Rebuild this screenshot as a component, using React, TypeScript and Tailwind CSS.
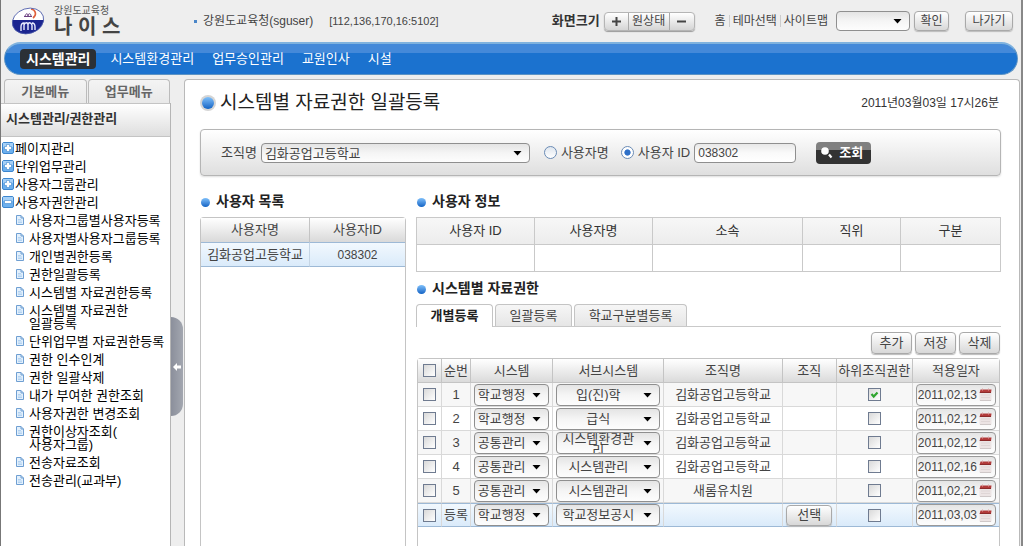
import { useState } from 'react'
import type { ReactNode } from 'react'

const topMenus = ['시스템환경관리', '업무승인관리', '교원인사', '시설']

const folders = ['페이지관리', '단위업무관리', '사용자그룹관리']

const pages = [
  ['사용자그룹별사용자등록'],
  ['사용자별사용자그룹등록'],
  ['개인별권한등록'],
  ['권한일괄등록'],
  ['시스템별 자료권한등록'],
  ['시스템별 자료권한', '일괄등록'],
  ['단위업무별 자료권한등록'],
  ['권한 인수인계'],
  ['권한 일괄삭제'],
  ['내가 부여한 권한조회'],
  ['사용자권한 변경조회'],
  ['권한이상자조회(', '사용자그룹)'],
  ['전송자료조회'],
  ['전송관리(교과부)'],
]

interface Row {
  no: string
  system: string
  sub: string
  org: string
  checked?: boolean
  date: string
}

const rows: Row[] = [
  { no: '1', system: '학교행정', sub: '입(진)학', org: '김화공업고등학교', checked: true, date: '2011,02,13' },
  { no: '2', system: '학교행정', sub: '급식', org: '김화공업고등학교', date: '2011,02,12' },
  { no: '3', system: '공통관리', sub: '시스템환경관리', org: '김화공업고등학교', date: '2011,02,12' },
  { no: '4', system: '공통관리', sub: '시스템관리', org: '김화공업고등학교', date: '2011,02,16' },
  { no: '5', system: '공통관리', sub: '시스템관리', org: '새롬유치원', date: '2011,02,21' },
  { no: '등록', system: '학교행정', sub: '학교정보공시', org: '', date: '2011,03,03' },
]

function Logo() {
  return (
    <svg width="34" height="30" viewBox="0 0 34 30" aria-hidden="true">
      <defs>
        <clipPath id="oval">
          <ellipse cx="17" cy="15" rx="16" ry="12.5" transform="rotate(-18 17 15)" />
        </clipPath>
      </defs>
      <g clipPath="url(#oval)">
        <rect width="34" height="30" fill="#fff" />
        <path d="M0 14h34v16H0z" fill="#1b2590" />
        <path d="M20 3c5 1 6 6 2 9" fill="none" stroke="#e0603c" strokeWidth="1.6" />
        <path d="M14 10c1-3 3-3 3 0M17 10c0-3 3-3 3 0M13 10.500h8" fill="none" stroke="#6b3f80" strokeWidth="1" />
        <path d="M10 25v-4c0-2 1-4 3-4v7M13 19c1-3 4-3 4 0v5M17 19c0-3 3-3 4 0v5M21 17c2 0 3 2 3 4v3" fill="none" stroke="#e8ebff" strokeWidth="1.4" />
      </g>
      <ellipse cx="17" cy="15" rx="16" ry="12.5" transform="rotate(-18 17 15)" fill="none" stroke="#4a58a8" strokeWidth="0.8" />
    </svg>
  )
}

function FolderIcon({ open }: { open?: boolean }) {
  return (
    <svg width="12" height="12" viewBox="0 0 12 12" className="shrink-0" aria-hidden="true">
      <rect x="0.5" y="0.5" width="11" height="11" rx="1.5" fill="#6db0ee" stroke="#3c86cf" />
      <path d="M1 1h10v4H1z" fill="#a5d0f7" />
      <path d={open ? 'M2.5 4.5h7v3h-7z' : 'M4.5 2.5h3v2h2v3h-2v2h-3v-2h-2v-3h2z'} fill="#fff" stroke="#3f86cc" strokeWidth="0.6" />
    </svg>
  )
}

function PageIcon() {
  return (
    <svg width="8" height="10" viewBox="0 0 8 10" className="mt-px shrink-0" aria-hidden="true">
      <path d="M.5.5h4.500l2.500 2.500v6.500h-7z" fill="#e3f0fc" stroke="#6f9fd2" />
      <path d="M5 .5V3h2.500" fill="none" stroke="#6f9fd2" />
      <path d="M2 4.500h3M2 6h4M2 7.500h4" stroke="#a6caee" strokeWidth="0.8" />
    </svg>
  )
}

function CalendarIcon() {
  return (
    <svg width="13" height="13" viewBox="0 0 13 13" aria-hidden="true">
      <path d="M.5 4h12v8.500H.5z" fill="#ece4e4" />
      <path d="M1 12.500h11" stroke="#cfc8c8" />
      <path d="M2 7h9M2 9.500h9" stroke="#dfd6d6" />
      <path d="M1.500 1.500h11l-.5 3.500H.5z" fill="#b23a3a" />
      <path d="M1 4.500h11" stroke="#8c2a2a" />
      <path d="M3.500.5v2M9.500.5v2" stroke="#d9a0a0" />
    </svg>
  )
}

function Dropdown({ label, value, className = '', center }: { label: string; value: string; className?: string; center?: boolean }) {
  return (
    <div className={`relative ${className}`}>
      <select
        aria-label={label}
        className={`block h-full w-full appearance-none rounded border border-[#8f8f8f] bg-linear-to-b from-[#e4e4e4] via-[#f5f5f5] to-[#fdfdfd] whitespace-normal outline-none ${
          center ? 'pr-5 text-center leading-3 [text-align-last:center]' : 'pr-4 pl-[3px]'
        }`}
      >
        <option>{value}</option>
      </select>
      <svg width="9" height="5" viewBox="0 0 9 5" className="pointer-events-none absolute top-1/2 right-2 -mt-0.5" aria-hidden="true">
        <path d="M.5 0h8l-4 4.500z" fill="#000" />
      </svg>
    </div>
  )
}

function Check({ label, checked }: { label: string; checked?: boolean }) {
  return (
    <span className="relative mx-auto block size-[13px]">
      <input
        type="checkbox"
        aria-label={label}
        defaultChecked={checked}
        className="peer block size-[13px] appearance-none border border-[#6f7b90] bg-linear-to-br from-[#d9d9d9] to-white"
      />
      <svg viewBox="0 0 13 13" className="pointer-events-none absolute inset-0 hidden peer-checked:block" aria-hidden="true">
        <path d="M3.500 6l2.200 2.500L9.500 4.500" fill="none" stroke="#2fa52f" strokeWidth="2.200" />
      </svg>
    </span>
  )
}

function Button({ children, className = '' }: { children: ReactNode; className?: string }) {
  return (
    <button className={`rounded-sm border border-[#a9a9a9] bg-linear-to-b from-white to-[#d8d8d8] leading-4 shadow-[0_1px_1px_#bbb] ${className}`}>
      {children}
    </button>
  )
}

function SectionTitle({ children }: { children: ReactNode }) {
  return (
    <h2 className="mb-1.5 flex h-5 items-center gap-1.5 pl-px text-sm font-bold text-[#222]">
      <span className="mt-0.5 size-[9px] rounded-full bg-linear-to-b from-[#7fc0fa] to-[#0e63c4]" />
      {children}
    </h2>
  )
}

function Header() {
  return (
    <header className="flex h-[42px] items-center pr-2 pl-[10px] text-xs text-[#444]">
      <Logo />
      <div className="ml-[9px] w-[140px]">
        <p className="text-[10px] leading-3 text-[#555]">강원도교육청</p>
        <p className="text-xl leading-5 font-bold text-[#444]">나 이 스</p>
      </div>
      <span className="mr-1.5 size-[3px] bg-[#4a86c8]" />
      <span>강원도교육청(sguser)</span>
      <span className="ml-4 text-[11px]">[112,136,170,16:5102]</span>

      <span className="ml-auto text-[13px] font-bold text-[#333]">화면크기</span>
      <div className="ml-1 flex h-[19px] w-[91px] divide-x divide-[#aaa] rounded-sm border border-[#b5b5b5] bg-linear-to-b from-white to-[#d5d5d5] shadow-[0_1px_1px_#999]">
        <button className="flex w-6 items-center justify-center" aria-label="확대">
          <svg width="9" height="9" viewBox="0 0 9 9">
            <path d="M4.500 0v9M0 4.500h9" stroke="#444" strokeWidth="2" />
          </svg>
        </button>
        <button className="flex-1 leading-4">원상태</button>
        <button className="flex w-6 items-center justify-center" aria-label="축소">
          <svg width="9" height="9" viewBox="0 0 9 9">
            <path d="M0 4.500h9" stroke="#444" strokeWidth="2" />
          </svg>
        </button>
      </div>
      <nav className="ml-5 flex items-center leading-3">
        <a href="#" className="pr-[3px]">홈</a>
        <a href="#" className="border-l border-[#ccc] px-[3px]">테마선택</a>
        <a href="#" className="border-l border-[#ccc] pl-[3px]">사이트맵</a>
      </nav>
      <Dropdown label="바로가기" value="" className="ml-2 h-5 w-[74px]" />
      <Button className="ml-1 h-5 w-[35px]">확인</Button>
      <Button className="ml-4 h-5 w-12">나가기</Button>
    </header>
  )
}

function Sidebar() {
  return (
    <aside className="flex w-[170px] shrink-0 flex-col">
      <div className="flex h-6 gap-px pr-px pl-[3px] text-[13px] font-bold text-[#666]">
        <button className="flex-1 rounded-t-sm border border-b-0 border-[#bbb] bg-linear-to-b from-[#f4f4f4] to-[#e8e8e8]">기본메뉴</button>
        <button className="flex-1 rounded-t-sm border border-b-0 border-[#bbb] bg-linear-to-b from-[#f4f4f4] to-[#e8e8e8]">업무메뉴</button>
      </div>
      <div className="flex-1 border-r border-[#b5b5b5] bg-white">
        <h2 className="h-[34px] border-t border-b border-[#c4c4c4] bg-linear-to-b from-white to-[#dedede] pl-[5px] text-[13px] leading-[30px] font-bold text-[#333]">시스템관리/권한관리</h2>
        <ul className="pt-0.5 pl-px text-[13px] leading-[13px] text-black">
          {folders.map((name) => (
            <li key={name}>
              <a href="#" className="flex gap-px pt-[3px] pb-0.5">
                <FolderIcon />
                {name}
              </a>
            </li>
          ))}
          <li>
            <a href="#" className="flex gap-px pt-[3px] pb-0.5">
              <FolderIcon open />
              사용자권한관리
            </a>
            <ul className="pl-3.5">
              {pages.map((lines) => (
                <li key={lines[0]}>
                  <a href="#" className="flex gap-[5px] pt-[3px] pb-0.5 whitespace-nowrap">
                    <PageIcon />
                    <span>
                      {lines.map((line) => (
                        <span key={line} className="block">{line}</span>
                      ))}
                    </span>
                  </a>
                </li>
              ))}
            </ul>
          </li>
        </ul>
      </div>
    </aside>
  )
}

function SearchBar() {
  return (
    <form className="flex h-[47px] items-center rounded-sm border border-[#b5b5b5] bg-linear-to-b from-white to-[#dfdfdf] pl-5 text-[13px] text-[#444] shadow-[0_1px_2px_#ddd]">
      <span>조직명</span>
      <Dropdown label="조직명" value="김화공업고등학교" className="ml-1 h-5 w-[269px]" />
      <label className="ml-3.5 flex items-center gap-1">
        <input type="radio" name="kind" className="size-[13px] appearance-none rounded-full border border-[#6a8bb5] bg-linear-to-b from-[#dfe6ee] to-white checked:bg-radial checked:from-[#2e70c8] checked:from-35% checked:to-white checked:to-45%" />
        사용자명
      </label>
      <label className="ml-3 flex items-center gap-1">
        <input type="radio" name="kind" defaultChecked className="size-[13px] appearance-none rounded-full border border-[#6a8bb5] checked:bg-radial checked:from-[#2e70c8] checked:from-35% checked:to-white checked:to-45%" />
        사용자 ID
      </label>
      <input type="text" aria-label="사용자 ID" defaultValue="038302" className="ml-1 h-5 w-[102px] rounded border border-[#8f8f8f] bg-linear-to-b from-[#e8e8e8] via-[#fafafa] to-white px-[3px] text-xs" />
      <button type="button" className="ml-5 flex h-[22px] w-[55px] items-center gap-1.5 rounded-sm bg-linear-to-b from-[#808080] from-35% to-[#333] to-36% pl-[5px] font-bold text-white">
        <svg width="12" height="12" viewBox="0 0 12 12" aria-hidden="true">
          <circle cx="4" cy="4" r="3.800" fill="#fff" />
          <path d="M8 7.500l2.500 3" stroke="#fff" strokeWidth="2.200" />
        </svg>
        조회
      </button>
    </form>
  )
}

function UserList() {
  return (
    <section className="flex w-[206px] shrink-0 flex-col">
      <SectionTitle>사용자 목록</SectionTitle>
      <div className="flex-1 rounded-t-sm border border-b-0 border-[#c4c4c4]">
        <table className="w-full table-fixed border-separate border-spacing-0 text-center text-[13px] text-[#444]">
          <colgroup>
            <col className="w-[109px]" />
            <col className="w-[95px]" />
          </colgroup>
          <thead>
            <tr className="h-6 bg-linear-to-b from-white to-[#d9d9d9]">
              <th className="border-r border-[#c4c4c4] p-0 font-normal">사용자명</th>
              <th className="p-0 font-normal">사용자ID</th>
            </tr>
          </thead>
          <tbody>
            <tr className="h-[25px] bg-linear-to-b from-[#f3f9fe] to-[#d9eafa]">
              <td className="border-y border-r border-y-[#9db9d6] border-r-[#c5d5e5] p-0">김화공업고등학교</td>
              <td className="border-y border-[#9db9d6] p-0 text-xs">038302</td>
            </tr>
          </tbody>
        </table>
      </div>
    </section>
  )
}

function UserInfo() {
  return (
    <table className="w-full table-fixed border-collapse text-[13px] text-[#333]">
      <colgroup>
        <col className="w-[118px]" />
        <col className="w-[118px]" />
        <col className="w-[150px]" />
        <col className="w-[98px]" />
        <col className="w-[100px]" />
      </colgroup>
      <thead>
        <tr className="h-[27px] bg-linear-to-b from-[#f7f7f7] to-[#ececec]">
          {['사용자 ID', '사용자명', '소속', '직위', '구분'].map((name) => (
            <th key={name} className="border border-[#c9c9c9] p-0 font-normal">{name}</th>
          ))}
        </tr>
      </thead>
      <tbody>
        <tr className="h-[27px]">
          {[1, 2, 3, 4, 5].map((n) => (
            <td key={n} className="border border-[#c9c9c9] p-0"></td>
          ))}
        </tr>
      </tbody>
    </table>
  )
}

function Tabs() {
  const [active, setActive] = useState('개별등록')
  const tabs = [
    { name: '개별등록', width: 'w-[77px]' },
    { name: '일괄등록', width: 'w-[77px]' },
    { name: '학교구분별등록', width: 'w-[113px]' },
  ]

  return (
    <div className="flex h-[23px] gap-0.5 border-b border-[#c9c9c9] text-[13px]" role="tablist">
      {tabs.map((tab) => (
        <button
          key={tab.name}
          role="tab"
          aria-selected={tab.name === active}
          onClick={() => setActive(tab.name)}
          className={`rounded-t border border-b-0 border-[#c4c4c4] leading-5 ${tab.width} ${
            tab.name === active ? '-mb-px bg-white font-bold text-[#222]' : 'bg-linear-to-b from-[#f6f6f6] to-[#e6e6e6] text-[#444]'
          }`}
        >
          {tab.name}
        </button>
      ))}
    </div>
  )
}

function AuthTable() {
  const cell = 'border-r border-b border-[#d9d9d9] p-0 last:border-r-0'
  return (
    <div className="mx-px mt-1 flex-1 rounded-t-sm border border-b-0 border-[#c4c4c4]">
      <table className="w-full table-fixed border-separate border-spacing-0 text-center text-[13px] text-[#444]">
        <colgroup>
          <col className="w-[24px]" />
          <col className="w-[29px]" />
          <col className="w-[82px]" />
          <col className="w-[111px]" />
          <col className="w-[118px]" />
          <col className="w-[54px]" />
          <col className="w-[76px]" />
          <col className="w-[86px]" />
        </colgroup>
        <thead>
          <tr className="h-6 bg-linear-to-b from-white to-[#d9d9d9]">
            <th className="border-r border-b border-[#c4c4c4] p-0">
              <Check label="전체선택" />
            </th>
            {['순번', '시스템', '서브시스템', '조직명', '조직', '하위조직권한', '적용일자'].map((name) => (
              <th key={name} className="border-r border-b border-[#c4c4c4] p-0 leading-5 font-normal whitespace-nowrap last:border-r-0">{name}</th>
            ))}
          </tr>
        </thead>
        <tbody>
          {rows.map((row) => (
            <tr
              key={row.no}
              className="h-6 odd:bg-[#f7f7f7] last:bg-linear-to-b last:from-[#f3f9fe] last:to-[#d9eafa] last:*:border-t last:*:border-b-[#9db9d6] last:*:border-t-[#9db9d6]"
            >
              <td className={cell}><Check label={`${row.no} 선택`} /></td>
              <td className={`${cell} leading-5`}>{row.no}</td>
              <td className={`${cell} px-[3px]`}><Dropdown label="시스템" value={row.system} className="h-[22px]" center /></td>
              <td className={`${cell} px-[3px]`}><Dropdown label="서브시스템" value={row.sub} className="h-[22px]" center /></td>
              <td className={`${cell} leading-5`}>{row.org}</td>
              <td className={cell}>{!row.org && <Button className="h-[21px] w-[46px]">선택</Button>}</td>
              <td className={cell}><Check label="하위조직권한" checked={row.checked} /></td>
              <td className={`${cell} px-[3px]`}>
                <div className="flex h-[22px] items-center rounded border border-[#999] bg-linear-to-b from-[#e4e4e4] via-[#f5f5f5] to-[#fdfdfd]">
                  <input type="text" aria-label="적용일자" defaultValue={row.date} className="w-full min-w-0 pl-px text-xs outline-none" />
                  <button className="mr-[3px] shrink-0" aria-label="달력"><CalendarIcon /></button>
                </div>
              </td>
            </tr>
          ))}
        </tbody>
      </table>
    </div>
  )
}

export default function App() {
  return (
    <div className="flex min-h-screen flex-col border-r-2 border-l border-r-[#888] border-l-[#777] bg-[#eeeeee] font-['Liberation_Sans','Noto_Sans_CJK_KR',sans-serif]">
      <Header />
      <nav className="mx-[3px] mb-1 flex h-[33px] items-center rounded-full border border-t-2 border-[#5c93c4] border-t-[#7fb2de] bg-linear-to-b from-[#4489d9] from-30% to-[#1b72cf] to-31% pl-[15px] text-[13px] text-white">
        <a href="#" className="mr-3.5 flex h-5 items-center rounded-sm bg-[#2b3036] px-1.5 text-sm font-bold">시스템관리</a>
        <div className="flex gap-[18px]">
          {topMenus.map((name) => (
            <a key={name} href="#">{name}</a>
          ))}
        </div>
      </nav>

      <div className="flex flex-1">
        <Sidebar />
        <div className="w-[13px] shrink-0">
          <button className="mt-[238px] flex h-[99px] w-3 items-center justify-center rounded-r-xl bg-linear-to-r from-[#8b8f9b] to-[#a3a7b0]" aria-label="메뉴 접기">
            <svg width="8" height="8" viewBox="0 0 8 8">
              <path d="M0 4l4-4v2.500h4v3H4V8z" fill="#fff" />
            </svg>
          </button>
        </div>
        <main className="mr-px flex min-w-0 flex-1 flex-col rounded-t border border-b-0 border-[#b9b9b9] bg-white pr-[18px] pl-[15px]">
          <div className="mb-[3px] flex h-[46px] items-center">
            <span className="mr-1 flex size-4 items-center justify-center rounded-full bg-[#d5d5d5]">
              <span className="size-3 rounded-full bg-linear-to-b from-[#7fc0fa] to-[#0e63c4]" />
            </span>
            <h1 className="text-[19px] text-[#222]">시스템별 자료권한 일괄등록</h1>
            <span className="mr-0.5 ml-auto text-xs text-[#333]">2011년03월03일 17시26분</span>
          </div>
          <SearchBar />
          <div className="mt-[15px] flex flex-1 gap-2.5">
            <UserList />
            <section className="flex min-w-0 flex-1 flex-col">
              <SectionTitle>사용자 정보</SectionTitle>
              <UserInfo />
              <div className="h-1.5" />
              <SectionTitle>시스템별 자료권한</SectionTitle>
              <Tabs />
              <div className="mt-[5px] flex justify-end gap-[3px] pr-px text-[13px] text-[#444]">
                <Button className="h-[22px] w-[41px]">추가</Button>
                <Button className="h-[22px] w-[41px]">저장</Button>
                <Button className="h-[22px] w-[41px]">삭제</Button>
              </div>
              <AuthTable />
            </section>
          </div>
        </main>
      </div>
    </div>
  )
}
